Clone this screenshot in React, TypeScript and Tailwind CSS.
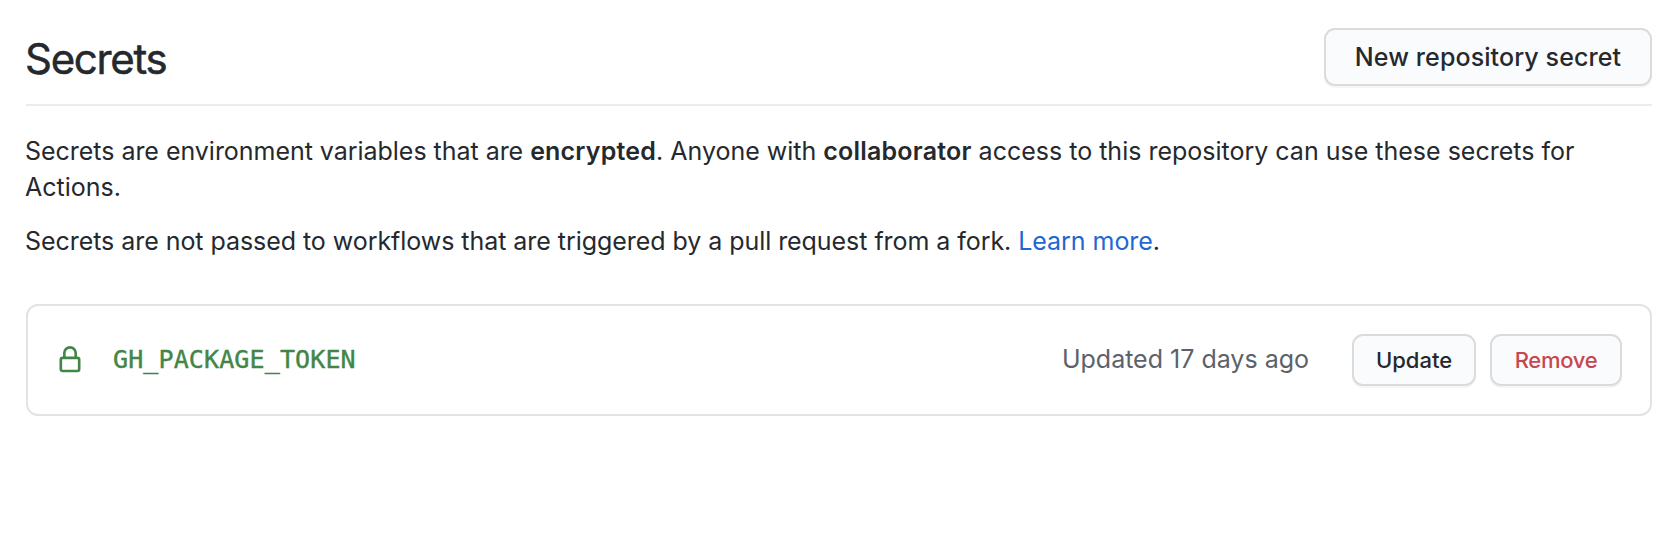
export default function App() {
  return (
    <main className="h-[534px] w-[1674px] overflow-hidden bg-white pt-7 pr-[22px] pl-[26px] font-['Inter',sans-serif] text-[25px] text-[#25292e]">
      <header className="flex h-[78px] items-start justify-between border-b-2 border-[#ebebf0]">
        <h1 className="mt-[7px] -ml-px text-[42px] leading-[48px] font-normal tracking-[-1.3px] whitespace-nowrap [-webkit-text-stroke:0.5px_#25292e]">Secrets</h1>
        <button className="h-[58px] w-[328px] rounded-[11px] border-2 border-[#d9dbdc] bg-[#fafbfd] pt-px font-medium tracking-[0.1px] whitespace-nowrap shadow-[0_2px_0_rgba(27,31,35,0.04)]">New repository secret</button>
      </header>
      <p className="mt-[27px] -ml-px leading-9 whitespace-nowrap">
        <span className="tracking-[-0.03px]">Secrets are environment variables that are </span><b className="font-semibold tracking-[0.18px]">encrypted</b>. Anyone with <b className="font-semibold tracking-[0.2px]">collaborator</b> access to this repository can use these secrets for
        <br />
        Actions.
      </p>
      <p className="mt-[18px] -ml-px leading-9 tracking-[-0.05px] whitespace-nowrap">
        Secrets are not passed to workflows that are triggered by a pull request from a fork. <a className="text-[#2167d3]">Learn more</a>.
      </p>
      <section className="mt-[45px] flex h-[112px] items-center rounded-[12px] border-2 border-[#e2e2e8] px-7">
        <svg className="mr-[30px] size-7 text-[#428646]" viewBox="0 0 16 16" fill="currentColor">
          <path fillRule="evenodd" d="M4 4v2h-.25A1.75 1.75 0 002 7.75v5.5c0 .966.784 1.75 1.75 1.75h8.5A1.75 1.75 0 0014 13.25v-5.5A1.75 1.75 0 0012.25 6H12V4a4 4 0 10-8 0zm6.5 2V4a2.5 2.5 0 10-5 0v2h5zM12 7.5h.25a.25.25 0 01.25.25v5.5a.25.25 0 01-.25.25h-8.5a.25.25 0 01-.25-.25v-5.5a.25.25 0 01.25-.25H12z" />
        </svg>
        <code className="-ml-px pb-px font-['DejaVu_Sans_Mono',monospace] text-[25px] tracking-[0.12px] text-[#428646] [-webkit-text-stroke:0.4px_#428646]">GH_PACKAGE_TOKEN</code>
        <span className="mr-[43px] ml-auto text-[#5b626a]">Updated 17 days ago</span>
        <button className="mr-[14px] h-[52px] w-[124px] rounded-[11px] border-2 border-[#d9dbdc] bg-[#fafbfd] text-[22px] font-medium shadow-[0_2px_0_rgba(27,31,35,0.04)]">Update</button>
        <button className="h-[52px] w-[132px] rounded-[11px] border-2 border-[#d9dbdc] bg-[#fafbfd] text-[22px] font-medium tracking-[-0.3px] text-[#c7474f] shadow-[0_2px_0_rgba(27,31,35,0.04)]">Remove</button>
      </section>
    </main>
  );
}
